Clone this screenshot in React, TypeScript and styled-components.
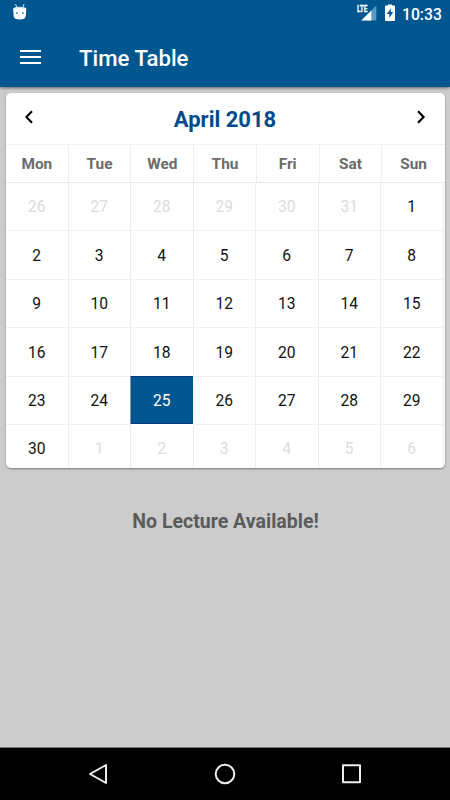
import React from "react";
import styled, { createGlobalStyle } from "styled-components";

const GlobalStyle = createGlobalStyle`
  * { box-sizing: border-box; }
  body { margin: 0; background: #ccc; font-family: Roboto, "Liberation Sans", sans-serif; }
`;

const Screen = styled.div`
  width: 450px;
  height: 800px;
  display: flex;
  flex-direction: column;
  background: #cccccc;
  overflow: hidden;
`;

const Header = styled.header`
  height: 87px;
  flex: none;
  background: #00568f;
  color: #fff;
  box-shadow: 0 1px 3px rgba(0, 0, 0, 0.5);
`;

const StatusBar = styled.div`
  height: 29px;
  display: flex;
  align-items: flex-start;
  justify-content: space-between;
  padding: 0 8px 0 12px;
`;

const StatusIcons = styled.div`
  display: flex;
`;

const Clock = styled.span`
  width: 40px;
  padding-top: 5px;
  margin-left: -0.5px;
  font-size: 15.7px;
  line-height: 20px;
  font-weight: 500;
  white-space: nowrap;
`;

const Toolbar = styled.div`
  height: 58px;
  display: flex;
  align-items: center;
  padding-left: 20px;
`;

const Title = styled.h1`
  margin: 0 0 0 38px;
  font-size: 22.2px;
  line-height: 30px;
  font-weight: 500;
`;

const MenuButton = styled.button`
  display: flex;
  padding: 0;
  border: 0;
  background: none;
  color: inherit;
`;

const ToolbarMenuButton = styled(MenuButton)`
  margin-top: -3px;
`;

const Content = styled.main`
  flex: 1;
  padding: 6px 5px 0 6px;
`;

const Card = styled.section`
  height: 375px;
  border-radius: 5px;
  overflow: hidden;
  background: #fff;
  box-shadow: 0 1px 2px rgba(0, 0, 0, 0.42);
`;

const MonthBar = styled.div`
  height: 51px;
  display: flex;
  align-items: center;
  justify-content: space-between;
  padding: 0 19px 0 18px;
`;

const Month = styled.h2`
  margin: 2px 0 0;
  font-size: 22px;
  line-height: 28px;
  font-weight: 700;
  color: #004a8f;
`;

const ArrowButton = styled(MenuButton)`
  margin-top: -3px;
  color: #000;
`;

const Weekdays = styled.div`
  height: 39px;
  display: grid;
  grid-template-columns: repeat(7, 1fr);
  border-top: 1px solid #f1f1f1;
  border-bottom: 1px solid #e9e9e9;
`;

const Weekday = styled.div`
  display: flex;
  align-items: center;
  justify-content: center;
  font-size: 15.4px;
  font-weight: 700;
  color: #6b6b6b;
  border-right: 1px solid #ededed;
  &:last-child { border-right: 0; }
`;

const Dates = styled.div`
  width: 437.5px;
  display: grid;
  grid-template-columns: repeat(7, 1fr);
  grid-auto-rows: 48.4px;
`;

const DateCell = styled.div<{ $tone: "normal" | "muted" | "selected" }>`
  display: flex;
  align-items: center;
  justify-content: center;
  padding-top: 1.6px;
  font-size: 15.6px;
  color: ${({ $tone }) => ($tone === "muted" ? "#dcdcdc" : $tone === "selected" ? "#fff" : "#111")};
  background: ${({ $tone }) => ($tone === "selected" ? "#00568f" : "#fff")};
  border-right: 1px solid ${({ $tone }) => ($tone === "selected" ? "#00568f" : "#ececec")};
  border-bottom: 1px solid ${({ $tone }) => ($tone === "selected" ? "#00327f" : "#f0f0f0")};
`;

const SelectedCell = styled(DateCell)`
  margin: -1px 1px 1px 0;
  padding-top: 3px;
  padding-left: 1px;
  box-shadow: inset 0 1px #00327f, -1px 0 #8795b0;
`;

const Message = styled.p`
  margin: 40px 0 0;
  text-align: center;
  font-size: 19.55px;
  line-height: 28px;
  font-weight: 700;
  color: #5b5b5b;
`;

const NavBar = styled.nav`
  height: 53px;
  flex: none;
  display: flex;
  align-items: center;
  justify-content: space-between;
  padding: 0 87px 0 87px;
  background: #000;
  border-top: 1px solid #777;
`;

const weekdays = ["Mon", "Tue", "Wed", "Thu", "Fri", "Sat", "Sun"];
const dates = Array.from({ length: 42 }, (_, i) => {
  if (i < 6) return { day: 26 + i, tone: "muted" as const };
  if (i > 35) return { day: i - 35, tone: "muted" as const };
  const day = i - 5;
  return { day, tone: day === 25 ? ("selected" as const) : ("normal" as const) };
});

const DebugIcon = () => (
  <svg width="16" height="22" viewBox="0 0 16 22" fill="#fff">
    <path d="M3.5 4l1.2 3M12 4l-1 3" stroke="#c7dced" strokeWidth="1" />
    <path d="M1.2 8.2Q7.7 5.4 14.3 8.2L13.8 16Q13.5 19.6 7.7 19.6T1.6 16Z" />
    <path d="M2 8.3Q7.7 6.6 13.6 8.3" fill="none" stroke="#a9cee5" strokeWidth=".8" />
    <circle cx="4.9" cy="13.1" r=".9" fill="#246c9e" />
    <circle cx="10.8" cy="13.1" r=".9" fill="#246c9e" />
  </svg>
);

const SignalText = styled.text`
  font: 700 9.5px Roboto, sans-serif;
`;

const SignalIcon = () => (
  <svg width="27" height="24" viewBox="0 0 27 24" fill="none">
    <path d="M19.3 5.5V20.5H4.3Z" fill="#5d98c0" />
    <path d="M14.3 10.5V20.5H4.3Z" fill="#fff" />
    <path d="M0 4h10.8v9H0Z" fill="#00568f" />
    <SignalText x="0" y="12.3" textLength="10.5" lengthAdjust="spacingAndGlyphs" fill="#fff" stroke="#fff" strokeWidth=".3">LTE</SignalText>
  </svg>
);

const BatteryIcon = () => (
  <svg width="19" height="24" viewBox="0 0 19 24">
    <path d="M4 5.5V4.5h4v1h2q1 0 1 1v13.5q0 1-1 1H2q-1 0-1-1V6.5q0-1 1-1Z" fill="#fff" />
    <path d="M7 8.2L2.9 13.9h2.4v4.2l3.9-6H6.7Z" fill="#00568f" />
  </svg>
);

const MenuIcon = () => (
  <svg width="21" height="16" viewBox="0 0 21 16" stroke="#fff" strokeWidth="2.2">
    <path d="M0 2h21M0 8h21M0 14h21" />
  </svg>
);

const ChevronIcon = ({ right = false }: { right?: boolean }) => (
  <svg width="10" height="14" viewBox="0 0 10 14" fill="none" stroke="#000" strokeWidth="2.1">
    <path d={right ? "M2 1.3l5.6 5.7L2 12.7" : "M8 1.3L2.4 7 8 12.7"} />
  </svg>
);

export default function App() {
  return (
    <>
      <GlobalStyle />
      <Screen>
        <Header>
          <StatusBar>
            <DebugIcon />
            <StatusIcons>
              <SignalIcon />
              <BatteryIcon />
              <Clock>10:33</Clock>
            </StatusIcons>
          </StatusBar>
          <Toolbar>
            <ToolbarMenuButton aria-label="Menu"><MenuIcon /></ToolbarMenuButton>
            <Title>Time Table</Title>
          </Toolbar>
        </Header>
        <Content>
          <Card>
            <MonthBar>
              <ArrowButton aria-label="Previous month"><ChevronIcon /></ArrowButton>
              <Month>April 2018</Month>
              <ArrowButton aria-label="Next month"><ChevronIcon right /></ArrowButton>
            </MonthBar>
            <Weekdays>
              {weekdays.map((name) => <Weekday key={name}>{name}</Weekday>)}
            </Weekdays>
            <Dates>
              {dates.map(({ day, tone }, i) => {
                const Cell = tone === "selected" ? SelectedCell : DateCell;
                return <Cell key={i} $tone={tone}>{day}</Cell>;
              })}
            </Dates>
          </Card>
          <Message>No Lecture Available!</Message>
        </Content>
        <NavBar>
          <svg width="22" height="24" viewBox="0 0 22 24" fill="none" stroke="#eee" strokeWidth="2" strokeLinejoin="round">
            <path d="M19 3v18L3 12Z" />
          </svg>
          <svg width="24" height="24" viewBox="0 0 24 24" fill="none" stroke="#eee" strokeWidth="2">
            <circle cx="12" cy="12" r="9.3" />
          </svg>
          <svg width="22" height="24" viewBox="0 0 22 24" fill="none" stroke="#eee" strokeWidth="2" strokeLinejoin="round">
            <path d="M2 3.3h17v17H2Z" />
          </svg>
        </NavBar>
      </Screen>
    </>
  );
}
